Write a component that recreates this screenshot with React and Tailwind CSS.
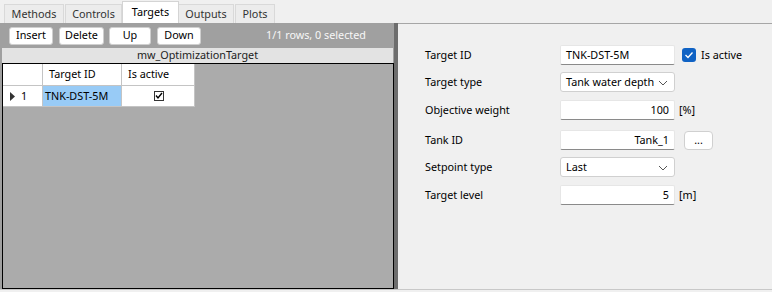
import React from "react";

const font = { fontFamily: '"Noto Sans", "Open Sans", sans-serif' };

function Tab({ label, active, w }) {
  if (active) {
    return (
      <div
        className={`h-[22px] ${w} bg-white border border-b-0 border-[#d4d4d4] flex items-center justify-center text-[10.8px] text-black -mx-px z-10`}
      >
        {label}
      </div>
    );
  }
  return (
    <div
      className={`h-[19px] ${w} bg-[#ececec] border border-b-0 border-[#d9d9d9] flex items-center justify-center text-[10.8px] text-[#333] mr-px`}
    >
      {label}
    </div>
  );
}

function ToolBtn({ label, w, ml }) {
  return (
    <div
      className={`h-[18px] ${w} ${ml} bg-white border border-[#cfcfcf] rounded-[3px] flex items-center justify-center text-[10.8px] text-black`}
    >
      {label}
    </div>
  );
}

function TextInput({ value, align = "left" }) {
  return (
    <div
      className={`w-[115px] h-[20px] bg-white border border-[#e6e6e6] border-b-[#8a8a8a] rounded-[2px] flex items-center px-[5px] text-[10.8px] text-black whitespace-nowrap ${
        align === "right" ? "justify-end" : "justify-start"
      }`}
    >
      {value}
    </div>
  );
}

function Select({ value }) {
  return (
    <div className="w-[115px] h-[20px] bg-white border border-[#d0d0d0] rounded-[3px] flex items-center justify-between pl-[5px] pr-[6px] text-[10.8px] text-black whitespace-nowrap">
      <span>{value}</span>
      <svg width="10" height="6" viewBox="0 0 10 6" className="mt-px">
        <path d="M1 1 L5 5 L9 1" fill="none" stroke="#555" strokeWidth="1" />
      </svg>
    </div>
  );
}

function Row({ label, mt, children }) {
  return (
    <div className={`flex items-center h-[20px] ${mt}`}>
      <div className="w-[135px] text-[10.8px] text-black whitespace-nowrap">{label}</div>
      {children}
    </div>
  );
}

export default function App() {
  return (
    <div
      className="w-[772px] h-[292px] bg-[#f0f0f0] flex flex-col overflow-hidden"
      style={font}
    >
      {/* Tabs */}
      <div className="h-[23px] flex items-end pl-[4px] shrink-0">
        <Tab label="Methods" w="w-[60px]" />
        <Tab label="Controls" w="w-[57px]" />
        <Tab label="Targets" w="w-[57px]" active />
        <Tab label="Outputs" w="w-[56px]" />
        <Tab label="Plots" w="w-[40px]" />
      </div>

      {/* Body */}
      <div className="h-[266px] flex shrink-0">
        {/* Left panel */}
        <div className="w-[394px] bg-[#a0a0a0] flex flex-col">
          <div className="h-[25px] flex items-center pl-[9px] pr-[28px]">
            <ToolBtn label="Insert" w="w-[44px]" ml="" />
            <ToolBtn label="Delete" w="w-[45px]" ml="ml-[6px]" />
            <ToolBtn label="Up" w="w-[42px]" ml="ml-[5px]" />
            <ToolBtn label="Down" w="w-[44px]" ml="ml-[6px]" />
            <div className="ml-auto text-[10.8px] text-[#f7f7f7] whitespace-nowrap">
              1/1 rows, 0 selected
            </div>
          </div>
          <div className="ml-[2px] mr-px h-[15px] bg-[#e3e3e3] flex items-center justify-center text-[10.8px] text-[#222] leading-none">
            mw_OptimizationTarget
          </div>
          <div className="ml-[2px] flex-1 bg-[#ababab] border border-black">
            {/* header row */}
            <div className="flex h-[22px]">
              <div className="w-[40px] bg-white border-r border-b border-[#c4c4c4]" />
              <div className="w-[79px] bg-white border-r border-b border-[#c4c4c4] flex items-center pl-[6px] text-[10.8px] text-black">
                Target ID
              </div>
              <div className="w-[73px] bg-white border-r border-b border-[#c4c4c4] flex items-center pl-[6px] text-[10.8px] text-black">
                Is active
              </div>
            </div>
            {/* data row */}
            <div className="flex h-[21px]">
              <div className="w-[40px] bg-white border-r border-b border-[#c4c4c4] flex items-center pl-[7px] text-[10.8px] text-black">
                <svg width="5" height="9" viewBox="0 0 5 9">
                  <path d="M0 0 L5 4.5 L0 9 Z" fill="#333" />
                </svg>
                <span className="ml-[6px]">1</span>
              </div>
              <div className="w-[79px] bg-[#98cbf6] border-r border-b border-[#c4c4c4] flex items-center pl-[2px] text-[10.8px] text-black whitespace-nowrap">
                TNK-DST-5M
              </div>
              <div className="w-[73px] bg-white border-r border-b border-[#c4c4c4] flex items-center justify-center">
                <div className="w-[10px] h-[10px] border border-[#333] bg-white flex items-center justify-center ml-[1px]">
                  <svg width="8" height="8" viewBox="0 0 8 8">
                    <path
                      d="M1 3.5 L3 6 L7 1"
                      fill="none"
                      stroke="#000"
                      strokeWidth="1.4"
                    />
                  </svg>
                </div>
              </div>
            </div>
          </div>
        </div>

        {/* Splitter */}
        <div className="w-[4px] bg-[#6d6d6d]" />

        {/* Right panel */}
        <div className="flex-1 border-t border-[#a6a6a6] pl-[27px] flex flex-col">
          <Row label="Target ID" mt="mt-[21px]">
            <TextInput value="TNK-DST-5M" />
            <div className="ml-[7px] w-[14px] h-[14px] rounded-[3px] bg-[#0f62c4] flex items-center justify-center">
              <svg width="10" height="8" viewBox="0 0 10 8">
                <path
                  d="M1.5 4 L4 6.5 L8.5 1.5"
                  fill="none"
                  stroke="#fff"
                  strokeWidth="1.3"
                />
              </svg>
            </div>
            <span className="ml-[5px] text-[10.8px] text-black">Is active</span>
          </Row>
          <Row label="Target type" mt="mt-[7px]">
            <Select value="Tank water depth" />
          </Row>
          <Row label="Objective weight" mt="mt-[8px]">
            <TextInput value="100" align="right" />
            <span className="ml-[4px] text-[10.8px] text-black">[%]</span>
          </Row>
          <Row label="Tank ID" mt="mt-[10px]">
            <TextInput value="Tank_1" align="right" />
            <div className="ml-[9px] w-[29px] h-[19px] bg-white border border-[#d0d0d0] rounded-[4px] flex items-center justify-center text-[10.8px] text-black">
              ...
            </div>
          </Row>
          <Row label="Setpoint type" mt="mt-[7px]">
            <Select value="Last" />
          </Row>
          <Row label="Target level" mt="mt-[8px]">
            <TextInput value="5" align="right" />
            <span className="ml-[4px] text-[10.8px] text-black">[m]</span>
          </Row>
        </div>
      </div>

      {/* Bottom strip */}
      <div className="flex-1 border-t border-[#c8c8c8] bg-[#f0f0f0]" />
    </div>
  );
}
